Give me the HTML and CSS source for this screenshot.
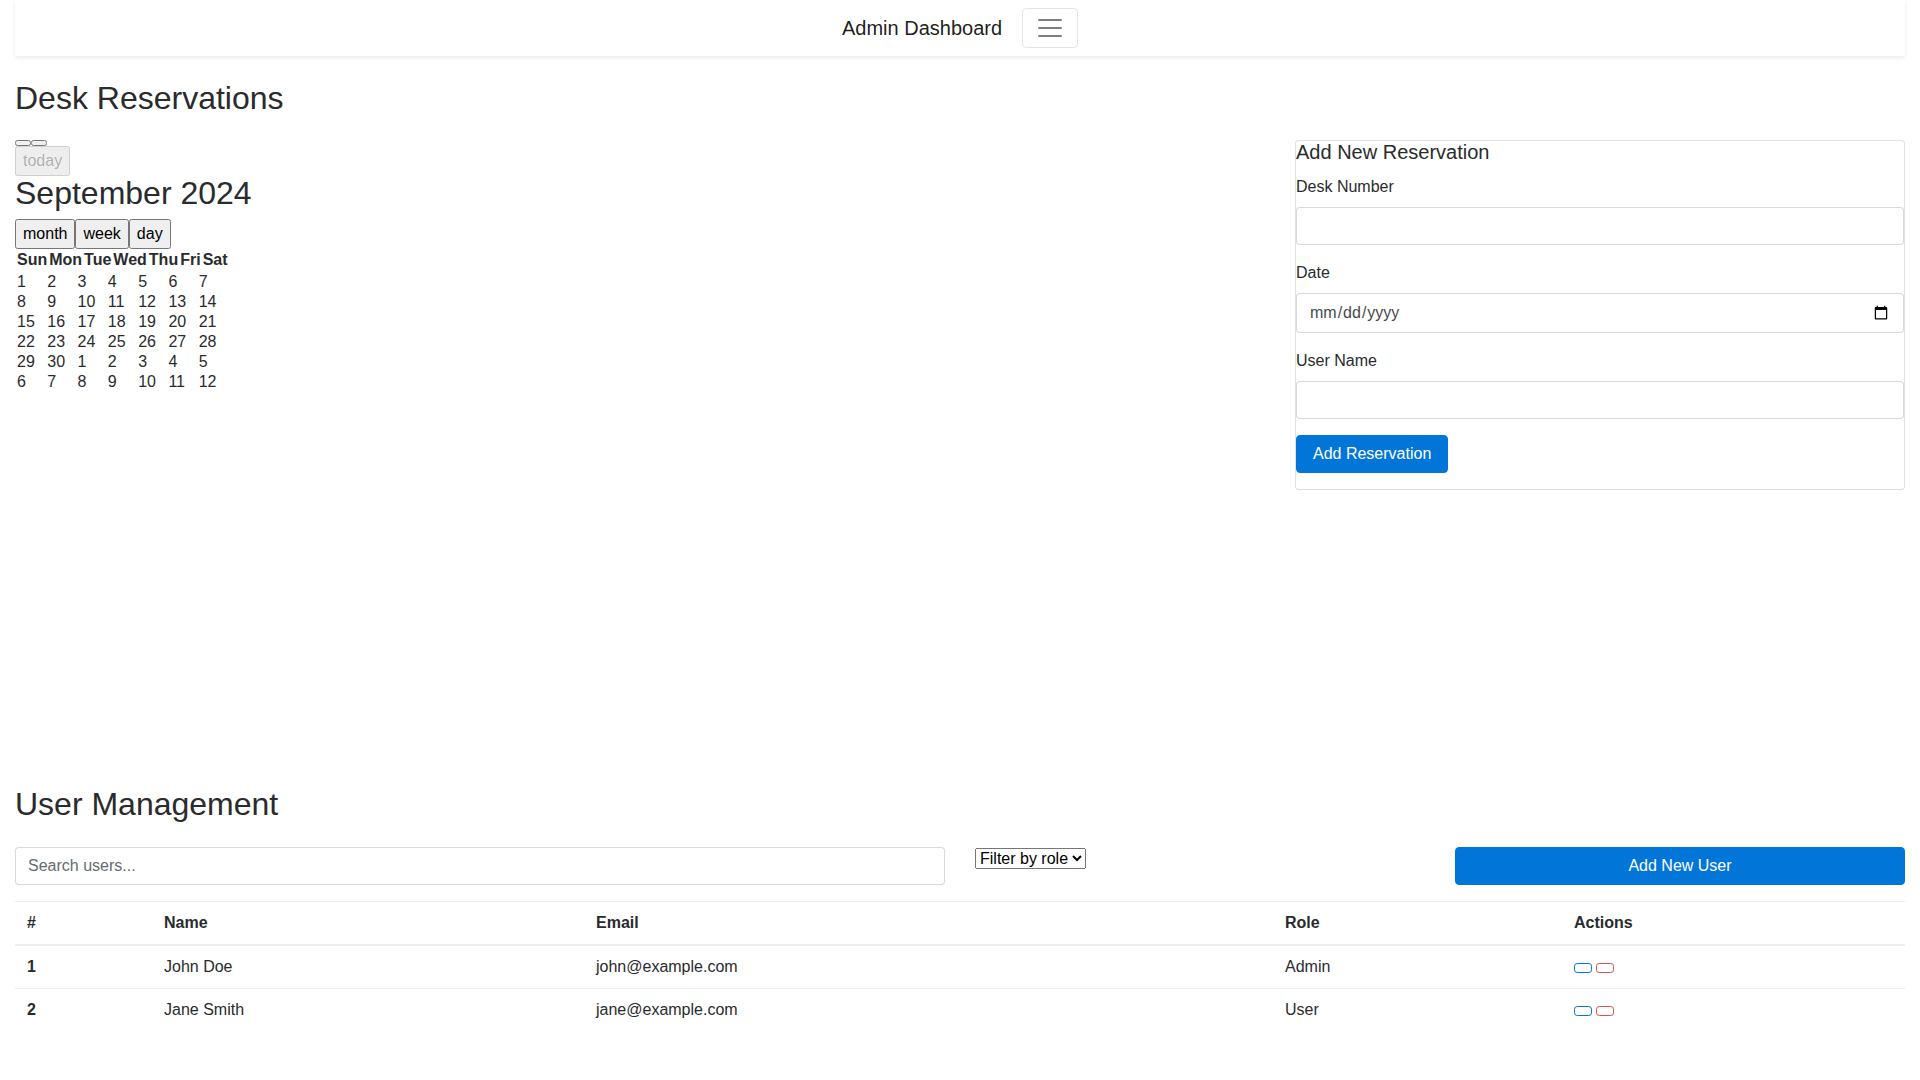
FILE: index.html
```html
<!DOCTYPE html>
<html lang="en">
<head>
<meta charset="utf-8">
<title>Admin Dashboard</title>
<link rel="stylesheet" href="styles.css">
</head>
<body>
<div class="container">
  <nav class="navbar">
    <span class="navbar-brand">Admin Dashboard</span>
    <button class="navbar-toggler" type="button" aria-label="Toggle navigation">
      <svg class="toggler-icon" viewBox="0 0 30 30" width="30" height="30"><path d="M4 7h22M4 15h22M4 23h22" stroke="rgba(0,0,0,0.5)" stroke-width="2" stroke-linecap="round" stroke-miterlimit="10" fill="none"/></svg>
    </button>
  </nav>

  <h2 class="page-title first-title">Desk Reservations</h2>

  <div class="row reservations">
    <div class="col-8">
      <div class="calendar">
        <div class="fc-toolbar">
          <div class="fc-group"><button class="fc-button" type="button"></button><button class="fc-button" type="button"></button></div>
          <div class="fc-group"><button class="fc-button" type="button" disabled>today</button></div>
          <h2 class="fc-title">September 2024</h2>
          <div class="fc-group"><button class="fc-button" type="button">month</button><button class="fc-button" type="button">week</button><button class="fc-button" type="button">day</button></div>
        </div>
        <table class="fc-head">
          <tr><th>Sun</th><th>Mon</th><th>Tue</th><th>Wed</th><th>Thu</th><th>Fri</th><th>Sat</th></tr>
        </table>
        <table class="fc-body">
          <tr><td>1</td><td>2</td><td>3</td><td>4</td><td>5</td><td>6</td><td>7</td></tr>
          <tr><td>8</td><td>9</td><td>10</td><td>11</td><td>12</td><td>13</td><td>14</td></tr>
          <tr><td>15</td><td>16</td><td>17</td><td>18</td><td>19</td><td>20</td><td>21</td></tr>
          <tr><td>22</td><td>23</td><td>24</td><td>25</td><td>26</td><td>27</td><td>28</td></tr>
          <tr><td>29</td><td>30</td><td>1</td><td>2</td><td>3</td><td>4</td><td>5</td></tr>
          <tr><td>6</td><td>7</td><td>8</td><td>9</td><td>10</td><td>11</td><td>12</td></tr>
        </table>
      </div>
    </div>
    <div class="col-4">
      <div class="card">
        <h5 class="card-title">Add New Reservation</h5>
        <form class="res-form">
          <div class="form-group">
            <label class="form-label" for="desk">Desk Number</label>
            <input class="form-control" id="desk" type="text">
          </div>
          <div class="form-group">
            <label class="form-label" for="date">Date</label>
            <input class="form-control date-control" id="date" type="date">
          </div>
          <div class="form-group">
            <label class="form-label" for="uname">User Name</label>
            <input class="form-control" id="uname" type="text">
          </div>
          <button class="btn btn-primary" type="button">Add Reservation</button>
        </form>
      </div>
    </div>
  </div>

  <section class="users">
    <h2 class="page-title">User Management</h2>
    <div class="row controls">
      <div class="col-6"><input class="form-control" type="text" placeholder="Search users..."></div>
      <div class="col-3">
        <select class="role-filter">
          <option>Filter by role</option>
          <option>Admin</option>
          <option>User</option>
        </select>
      </div>
      <div class="col-3"><button class="btn btn-primary btn-block" type="button">Add New User</button></div>
    </div>

    <table class="table">
      <colgroup>
        <col class="w-num"><col class="w-name"><col class="w-email"><col class="w-role"><col class="w-actions">
      </colgroup>
      <thead>
        <tr><th>#</th><th>Name</th><th>Email</th><th>Role</th><th>Actions</th></tr>
      </thead>
      <tbody>
        <tr>
          <th>1</th><td>John Doe</td><td>john@example.com</td><td>Admin</td>
          <td><button class="btn-sm btn-outline-primary" type="button"></button> <button class="btn-sm btn-outline-danger" type="button"></button></td>
        </tr>
        <tr>
          <th>2</th><td>Jane Smith</td><td>jane@example.com</td><td>User</td>
          <td><button class="btn-sm btn-outline-primary" type="button"></button> <button class="btn-sm btn-outline-danger" type="button"></button></td>
        </tr>
      </tbody>
    </table>
  </section>
</div>
</body>
</html>
```

FILE: styles.css
```css
html, body {
  margin: 0;
  padding: 0;
  background: #fff;
}

body {
  font-family: "Liberation Sans", Arial, sans-serif;
  font-size: 16px;
  line-height: 1.5;
  color: #292b2c;
}

*, *::before, *::after {
  box-sizing: border-box;
}

.container {
  padding: 0 15px;
}

/* Navbar */
.navbar {
  display: flex;
  justify-content: center;
  align-items: center;
  gap: 20px;
  height: 56px;
  padding: 8px 16px;
  background: #fff;
  box-shadow: 0 2px 4px rgba(0, 0, 0, 0.08);
}

.navbar-brand {
  font-size: 20px;
  line-height: 30px;
  padding: 4px 0;
  color: rgba(0, 0, 0, 0.9);
  white-space: nowrap;
}

.navbar-toggler {
  display: flex;
  align-items: center;
  justify-content: center;
  width: 56px;
  height: 40px;
  padding: 4px 12px;
  background: transparent;
  border: 1px solid rgba(0, 0, 0, 0.1);
  border-radius: 4px;
}

.toggler-icon {
  display: block;
  width: 30px;
  height: 30px;
}

/* Headings */
.page-title {
  font-size: 32px;
  font-weight: 400;
  line-height: 1.1;
  margin: 0 0 8px;
}

.first-title {
  margin-top: 25px;
}

/* Grid rows */
.row {
  display: flex;
  align-items: flex-start;
  margin: 0 -15px;
}

.col-8 {
  flex: 0 0 66.6667%;
  max-width: 66.6667%;
  padding: 0 15px;
}

.col-6 {
  flex: 0 0 50%;
  max-width: 50%;
  padding: 0 15px;
}

.col-4 {
  flex: 0 0 33.3333%;
  max-width: 33.3333%;
  padding: 0 15px;
}

.col-3 {
  flex: 0 0 25%;
  max-width: 25%;
  padding: 0 15px;
}

.reservations {
  margin-top: 24px;
}

/* Calendar (unstyled) */
.calendar {
  min-height: 599px;
}

.fc-group {
  display: flex;
}

.fc-button {
  font: inherit;
  margin: 0;
}

.fc-title {
  font-size: 32px;
  font-weight: 400;
  line-height: 1.1;
  margin: 0 0 8px;
}

.fc-head,
.fc-body {
  border-collapse: collapse;
  line-height: normal;
  margin-left: 1px;
}

.fc-head {
  margin-top: 1px;
}

.fc-head th {
  padding: 1px;
  text-align: left;
  font-weight: 700;
  white-space: nowrap;
}

.fc-body {
  margin-top: 2px;
  width: 212px;
  table-layout: fixed;
}

.fc-body td {
  padding: 1px;
  line-height: 18px;
}

/* Card / form */
.card {
  border: 1px solid rgba(0, 0, 0, 0.125);
  border-radius: 4px;
  background: #fff;
}

.card-title {
  font-size: 20px;
  font-weight: 400;
  line-height: 22px;
  margin: 0 0 12px;
}

.res-form {
  margin-bottom: 16px;
}

.form-group {
  margin-bottom: 16px;
}

.form-label {
  display: block;
  margin-bottom: 8px;
  line-height: 24px;
}

.form-control {
  display: block;
  width: 100%;
  height: 38px;
  margin: 0;
  padding: 8px 12px;
  font-family: inherit;
  font-size: 16px;
  line-height: 1.25;
  color: #464a4c;
  background: #fff;
  border: 1px solid rgba(0, 0, 0, 0.15);
  border-radius: 4px;
}

.form-control::placeholder {
  color: #636c72;
  opacity: 1;
}

.date-control {
  height: 40px;
}

.btn {
  display: inline-block;
  margin: 0;
  padding: 8px 16px;
  font-family: inherit;
  font-size: 16px;
  line-height: 20px;
  text-align: center;
  white-space: nowrap;
  border: 1px solid transparent;
  border-radius: 4px;
  cursor: pointer;
}

.btn-primary {
  color: #fff;
  background: #0275d8;
  border-color: #0275d8;
}

.btn-block {
  display: block;
  width: 100%;
}

/* Users section */
.users {
  margin-top: 48px;
}

.controls {
  margin-top: 25px;
}

.role-filter {
  margin: 0;
  font-family: "Liberation Sans", Arial, sans-serif;
  font-size: 16px;
}

.table {
  width: 100%;
  margin-top: 16px;
  border-collapse: collapse;
  table-layout: fixed;
  line-height: 18px;
}

.w-num { width: 137px; }
.w-name { width: 432px; }
.w-email { width: 689px; }
.w-role { width: 289px; }
.w-actions { width: 343px; }

.table th,
.table td {
  padding: 12px;
  text-align: left;
  vertical-align: top;
  border-top: 1px solid #eceeef;
}

.table thead th {
  font-weight: 700;
  vertical-align: bottom;
  border-bottom: 2px solid #eceeef;
}

.table tbody th {
  font-weight: 700;
}

.btn-sm {
  display: inline-block;
  width: 18px;
  height: 10px;
  margin: 0;
  padding: 0;
  vertical-align: baseline;
  background: transparent;
  border: 1px solid;
  border-radius: 3.2px;
  cursor: pointer;
}

.btn-outline-primary {
  border-color: #0275d8;
}

.btn-outline-danger {
  border-color: #d9534f;
}
```
